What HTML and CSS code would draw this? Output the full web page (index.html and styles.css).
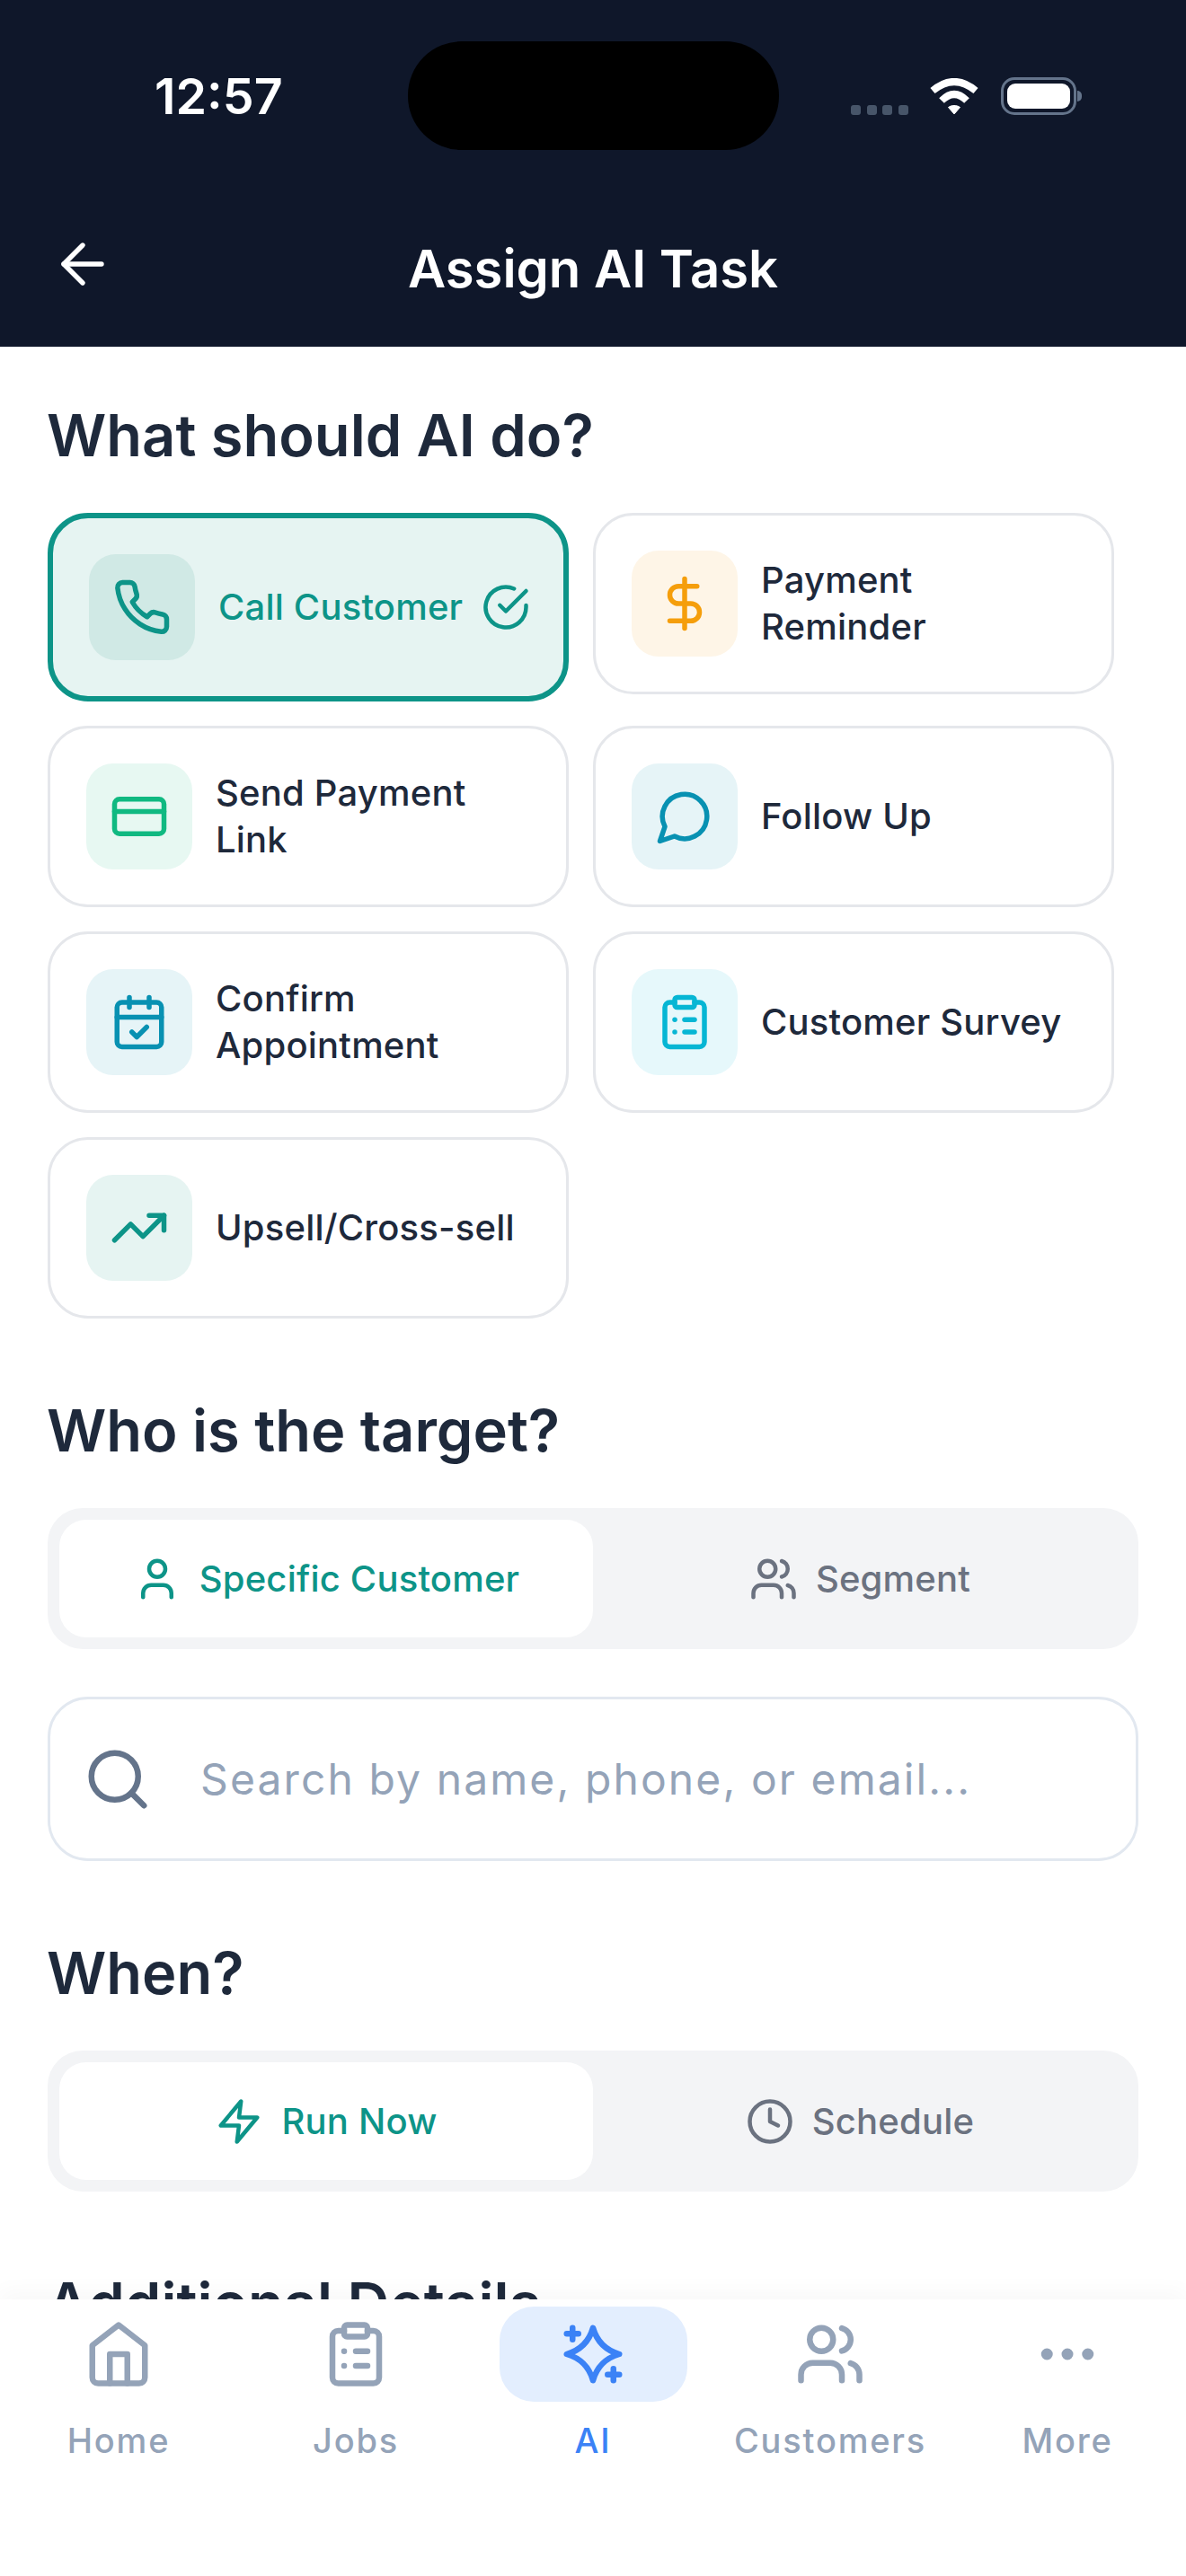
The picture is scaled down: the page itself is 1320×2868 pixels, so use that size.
FILE: index.html
```html
<!DOCTYPE html>
<html lang="en">
<head>
<meta charset="UTF-8" />
<title>Assign AI Task</title>
<link rel="stylesheet" href="styles.css">
</head>
<body>
<div class="phone">

  <header class="top">
    <div class="status">
      <span class="time">12:57</span>
      <span class="island"></span>
      <div class="status-icons">
        <span class="signal"><i></i><i></i><i></i><i></i></span>
        <svg class="wifi" viewBox="0 0 56 41"><path d="M4 14Q28 -6 52 14"/><path d="M14 25Q28 11 42 25"/><path class="wifi-dot" d="M28 30.500c2.500 0 4.800.7 6.500 2L28 40l-6.500-7.500c1.700-1.300 4-2 6.500-2z"/></svg>
        <span class="battery"><span class="battery-fill"></span></span>
      </div>
    </div>
    <div class="titlebar">
      <svg class="back" viewBox="0 0 24 24"><path d="M19 12H5"/><path d="M12 19l-7-7 7-7"/></svg>
      <h1>Assign AI Task</h1>
      <span class="back-spacer"></span>
    </div>
  </header>

  <main class="content">
    <section class="block">
      <h2>What should AI do?</h2>
      <div class="tasks">
        <div class="task selected">
          <span class="task-icon"><svg viewBox="0 0 24 24"><path d="M22 16.920v3a2 2 0 0 1-2.180 2 19.790 19.790 0 0 1-8.630-3.070 19.500 19.500 0 0 1-6-6 19.790 19.790 0 0 1-3.070-8.670A2 2 0 0 1 4.110 2h3a2 2 0 0 1 2 1.720 12.840 12.840 0 0 0 .7 2.810 2 2 0 0 1-.45 2.110L8.090 9.910a16 16 0 0 0 6 6l1.270-1.270a2 2 0 0 1 2.110-.45 12.840 12.840 0 0 0 2.810.7A2 2 0 0 1 22 16.920z"/></svg></span>
          <span class="task-name">Call Customer</span>
          <svg class="task-check" viewBox="0 0 24 24"><path d="M22 11.080V12a10 10 0 1 1-5.930-9.140"/><path d="M22 4L12 14.010l-3-3"/></svg>
        </div>
        <div class="task">
          <span class="task-icon amber"><svg viewBox="0 0 24 24"><path d="M12 2v20"/><path d="M17 5H9.500a3.500 3.500 0 0 0 0 7h5a3.500 3.500 0 0 1 0 7H6"/></svg></span>
          <span class="task-name">Payment Reminder</span>
        </div>
        <div class="task">
          <span class="task-icon green"><svg viewBox="0 0 24 24"><rect x="2" y="5" width="20" height="14" rx="2"/><path d="M2 10h20"/></svg></span>
          <span class="task-name">Send Payment Link</span>
        </div>
        <div class="task">
          <span class="task-icon blue"><svg viewBox="0 0 24 24"><path d="M7.900 20A9 9 0 1 0 4 16.100L2 22Z"/></svg></span>
          <span class="task-name">Follow Up</span>
        </div>
        <div class="task">
          <span class="task-icon blue"><svg viewBox="0 0 24 24"><path d="M8 2v4"/><path d="M16 2v4"/><rect x="3" y="4" width="18" height="18" rx="2"/><path d="M3 10h18"/><path d="M9 16l2 2 4-4"/></svg></span>
          <span class="task-name">Confirm Appointment</span>
        </div>
        <div class="task">
          <span class="task-icon cyan"><svg viewBox="0 0 24 24"><rect x="8" y="2" width="8" height="4" rx="1"/><path d="M16 4h2a2 2 0 0 1 2 2v14a2 2 0 0 1-2 2H6a2 2 0 0 1-2-2V6a2 2 0 0 1 2-2h2"/><path d="M12 11h4"/><path d="M12 16h4"/><path d="M8 11h.01"/><path d="M8 16h.01"/></svg></span>
          <span class="task-name">Customer Survey</span>
        </div>
        <div class="task">
          <span class="task-icon teal"><svg viewBox="0 0 24 24"><path d="M22 7l-8.500 8.500-5-5L2 17"/><path d="M16 7h6v6"/></svg></span>
          <span class="task-name">Upsell/Cross-sell</span>
        </div>
      </div>
    </section>

    <section class="block">
      <h2>Who is the target?</h2>
      <div class="toggle">
        <div class="toggle-tab active">
          <svg viewBox="0 0 24 24"><path d="M19 21v-2a4 4 0 0 0-4-4H9a4 4 0 0 0-4 4v2"/><circle cx="12" cy="7" r="4"/></svg>
          <span>Specific Customer</span>
        </div>
        <div class="toggle-tab">
          <svg viewBox="0 0 24 24"><path d="M16 21v-2a4 4 0 0 0-4-4H6a4 4 0 0 0-4 4v2"/><circle cx="9" cy="7" r="4"/><path d="M22 21v-2a4 4 0 0 0-3-3.870"/><path d="M16 3.130a4 4 0 0 1 0 7.750"/></svg>
          <span>Segment</span>
        </div>
      </div>
      <div class="search">
        <svg viewBox="0 0 24 24"><circle cx="11" cy="11" r="8"/><path d="M21 21l-4.350-4.350"/></svg>
        <span class="placeholder">Search by name, phone, or email...</span>
      </div>
    </section>

    <section class="block">
      <h2>When?</h2>
      <div class="toggle">
        <div class="toggle-tab active">
          <svg viewBox="0 0 24 24"><path d="M13 2L3 14h9l-1 8 10-12h-9l1-8z"/></svg>
          <span>Run Now</span>
        </div>
        <div class="toggle-tab">
          <svg viewBox="0 0 24 24"><circle cx="12" cy="12" r="10"/><path d="M12 6v6l4 2"/></svg>
          <span>Schedule</span>
        </div>
      </div>
    </section>

    <section class="block">
      <h2>Additional Details</h2>
    </section>
  </main>

  <nav class="tabbar">
    <div class="tab">
      <span class="tab-icon"><svg viewBox="0 0 24 24"><path d="M3 9l9-7 9 7v11a2 2 0 0 1-2 2H5a2 2 0 0 1-2-2z"/><path d="M9 22V12h6v10"/></svg></span>
      <span>Home</span>
    </div>
    <div class="tab">
      <span class="tab-icon"><svg viewBox="0 0 24 24"><rect x="8" y="2" width="8" height="4" rx="1"/><path d="M16 4h2a2 2 0 0 1 2 2v14a2 2 0 0 1-2 2H6a2 2 0 0 1-2-2V6a2 2 0 0 1 2-2h2"/><path d="M12 11h4"/><path d="M12 16h4"/><path d="M8 11h.01"/><path d="M8 16h.01"/></svg></span>
      <span>Jobs</span>
    </div>
    <div class="tab current">
      <span class="tab-icon"><svg viewBox="0 0 24 24"><path d="M12 3Q14 10 21 12Q14 14 12 21Q10 14 3 12Q10 10 12 3Z"/><path d="M5 3v4"/><path d="M3 5h4"/><path d="M19 17v4"/><path d="M17 19h4"/></svg></span>
      <span>AI</span>
    </div>
    <div class="tab">
      <span class="tab-icon"><svg viewBox="0 0 24 24"><path d="M16 21v-2a4 4 0 0 0-4-4H6a4 4 0 0 0-4 4v2"/><circle cx="9" cy="7" r="4"/><path d="M22 21v-2a4 4 0 0 0-3-3.870"/><path d="M16 3.130a4 4 0 0 1 0 7.750"/></svg></span>
      <span>Customers</span>
    </div>
    <div class="tab">
      <span class="tab-icon"><svg viewBox="0 0 24 24"><circle cx="12" cy="12" r="1"/><circle cx="19" cy="12" r="1"/><circle cx="5" cy="12" r="1"/></svg></span>
      <span>More</span>
    </div>
  </nav>

</div>
</body>
</html>
```

FILE: styles.css
```css
* {
  box-sizing: border-box;
}
body {
  margin: 0;
  font-family: "Inter", "Liberation Sans", sans-serif;
  background: #fff;
}
svg {
  fill: none;
  stroke: currentColor;
  stroke-width: 2;
  stroke-linecap: round;
  stroke-linejoin: round;
  flex-shrink: 0;
}
.phone {
  width: 1320px;
  height: 2868px;
  display: flex;
  flex-direction: column;
  overflow: hidden;
  background: #fff;
}

/* header */
.top {
  background: #0f172a;
  height: 386px;
  flex-shrink: 0;
  padding-top: 46px;
  color: #fff;
}
.status {
  display: flex;
  align-items: center;
  height: 121px;
  padding-left: 172px;
}
.time {
  width: 282px;
  font-size: 55.5px;
  font-weight: 600;
  line-height: 1;
}
.island {
  width: 413px;
  height: 121px;
  background: #000;
  border-radius: 60px;
}
.status-icons {
  display: flex;
  align-items: flex-end;
  margin-left: 80px;
  height: 42px;
}
.signal {
  display: flex;
  gap: 6.5px;
  width: 87px;
}
.signal i {
  width: 11px;
  height: 11px;
  border-radius: 3px;
  background: #475569;
}
.wifi {
  width: 56px;
  height: 41px;
  stroke-width: 8;
  stroke-linecap: butt;
  margin-right: 24px;
}
.wifi-dot {
  fill: #fff;
  stroke: #fff;
  stroke-width: 1;
}
.battery {
  width: 84px;
  height: 42px;
  border: 3px solid #64748b;
  border-radius: 15px;
  padding: 4px;
  display: flex;
  position: relative;
}
.battery::after {
  content: "";
  position: absolute;
  right: -9px;
  top: 12px;
  width: 5px;
  height: 12px;
  background: #64748b;
  border-radius: 0 6px 6px 0;
}
.battery-fill {
  flex: 1;
  background: #fff;
  border-radius: 9px;
}
.titlebar {
  display: flex;
  align-items: center;
  justify-content: space-between;
  margin-top: 91px;
  padding: 0 56px;
  height: 72px;
}
.back {
  width: 72px;
  height: 72px;
  stroke-width: 1.8;
}
.back-spacer {
  width: 72px;
}
h1 {
  margin: 10px 0 0;
  font-size: 58px;
  font-weight: 600;
  line-height: 72px;
}

/* content */
.content {
  flex: 1;
  min-height: 0;
  overflow: hidden;
  padding: 61px 53px 0;
}
.block {
  margin-bottom: 87px;
}
h2 {
  margin: 0 0 48px -1px;
  font-size: 65px;
  font-weight: 600;
  line-height: 76px;
  color: #1e293b;
}
.tasks {
  display: grid;
  grid-template-columns: 580px 580px;
  gap: 27px;
  align-items: start;
}
.task {
  display: flex;
  align-items: center;
  gap: 26px;
  padding: 39px 40px;
  background: #fff;
  border: 3px solid #e5e7eb;
  border-radius: 45px;
}
.task.selected {
  padding: 40px 38px 40px 40px;
  border: 6px solid #0d9488;
  background: #e6f4f2;
}
.task-icon {
  width: 118px;
  height: 118px;
  border-radius: 30px;
  display: flex;
  align-items: center;
  justify-content: center;
  flex-shrink: 0;
  background: #e6f4f2;
  color: #0d9488;
}
.task.selected .task-icon {
  background: #d0e9e5;
}
.task-icon svg {
  width: 66px;
  height: 66px;
}
.task-icon.amber {
  background: #fef5e7;
  color: #f59e0b;
}
.task-icon.green {
  background: #e7f8f2;
  color: #10b981;
}
.task-icon.blue {
  background: #e6f4f7;
  color: #0891b2;
}
.task-icon.cyan {
  background: #e6f8fb;
  color: #06b6d4;
}
.task-name {
  font-size: 40px;
  font-weight: 500;
  letter-spacing: 0.2px;
  line-height: 52px;
  color: #1e293b;
}
.task.selected .task-name {
  color: #0d9488;
  white-space: nowrap;
}
.task-check {
  width: 54px;
  height: 54px;
  margin-left: -5px;
  color: #0d9488;
}

/* segmented toggle */
.toggle {
  display: flex;
  height: 157px;
  padding: 13px;
  background: #f3f4f6;
  border-radius: 39px;
}
.toggle-tab {
  flex: 1;
  display: flex;
  align-items: center;
  justify-content: center;
  gap: 20px;
  border-radius: 30px;
  font-size: 40px;
  font-weight: 500;
  letter-spacing: 0.2px;
  color: #6b7280;
}
.toggle-tab.active {
  background: #fff;
  color: #0d9488;
}
.toggle-tab svg {
  width: 54px;
  height: 54px;
}

/* search */
.search {
  display: flex;
  align-items: center;
  gap: 53px;
  height: 183px;
  margin-top: 53px;
  padding-left: 36px;
  border: 3px solid #e2e8f0;
  border-radius: 45px;
  color: #64748b;
}
.search svg {
  width: 78px;
  height: 78px;
}
.placeholder {
  font-size: 48px;
  letter-spacing: 2.1px;
  color: #94a3b8;
}

/* bottom tabs */
.tabbar {
  position: relative;
  display: flex;
  height: 308px;
  flex-shrink: 0;
  padding-top: 8px;
  background: #fff;
  box-shadow: 0 -8px 24px rgba(0, 0, 0, 0.03);
}
.tab {
  flex: 1;
  display: flex;
  flex-direction: column;
  align-items: center;
  font-size: 38px;
  font-weight: 500;
  letter-spacing: 1.8px;
  line-height: 46px;
  color: #94a3b8;
}
.tab-icon {
  width: 209px;
  height: 106px;
  border-radius: 38px;
  margin-bottom: 20px;
  display: flex;
  align-items: center;
  justify-content: center;
}
.tab-icon svg {
  width: 78px;
  height: 78px;
}
.tab.current {
  color: #3b82f6;
}
.tab.current .tab-icon {
  background: #e3eefe;
}
```
